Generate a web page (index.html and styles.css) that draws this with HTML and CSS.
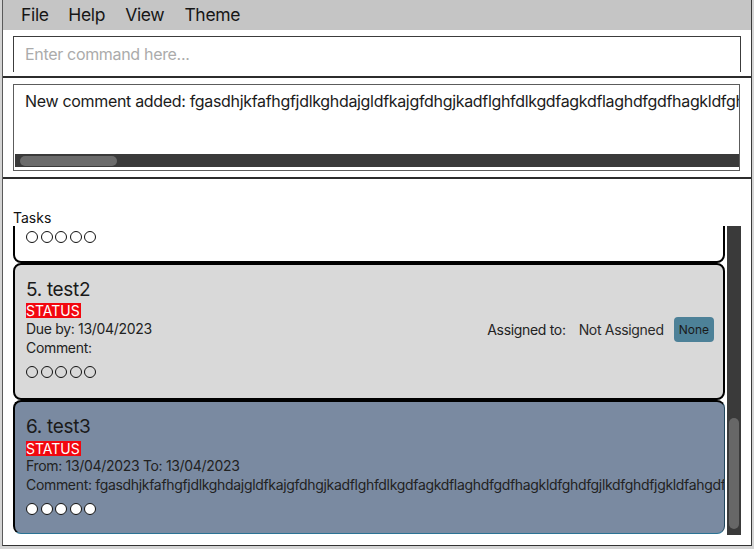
FILE: index.html
```html
<!DOCTYPE html>
<html lang="en">
<head>
<meta charset="utf-8">
<title>Tasks</title>
<link rel="stylesheet" href="styles.css">
</head>
<body>
<div class="app">
  <nav class="menubar">
    <span class="menu-item">File</span>
    <span class="menu-item">Help</span>
    <span class="menu-item">View</span>
    <span class="menu-item">Theme</span>
  </nav>
  <div class="frame">
    <section class="command-pane">
      <div class="command-box">Enter command here...</div>
    </section>
    <section class="result-pane">
      <div class="result-box">
        <div class="result-text">New comment added: fgasdhjkfafhgfjdlkghdajgldfkajgfdhgjkadflghfdlkgdfagkdflaghdfgdfhagkldfghdfgjlkdfghdfjgkldfahgdfkgjdlfhgakdjfhgldkafjhgdfkl</div>
        <div class="hscroll"><div class="hthumb"></div></div>
      </div>
    </section>
    <section class="tasks-pane">
      <div class="tasks-label">Tasks</div>
      <div class="list">
        <div class="list-viewport">
          <div class="card card-plain card-first">
            <div class="dots"><span class="dot"></span><span class="dot"></span><span class="dot"></span><span class="dot"></span><span class="dot"></span></div>
          </div>
          <div class="card card-grey">
            <div class="card-title">5. test2</div>
            <div class="status"><span class="status-tag">STATUS</span></div>
            <div class="details">
              <div class="details-left">
                <div class="line">Due by: 13/04/2023</div>
                <div class="line">Comment:</div>
              </div>
              <div class="assign">
                <span class="assign-label">Assigned to:</span>
                <span class="assign-name">Not Assigned</span>
                <span class="badge">None</span>
              </div>
            </div>
            <div class="dots"><span class="dot"></span><span class="dot"></span><span class="dot"></span><span class="dot"></span><span class="dot"></span></div>
          </div>
          <div class="card card-selected">
            <div class="card-title">6. test3</div>
            <div class="status"><span class="status-tag">STATUS</span></div>
            <div class="line">From: 13/04/2023 To: 13/04/2023</div>
            <div class="line">Comment: fgasdhjkfafhgfjdlkghdajgldfkajgfdhgjkadflghfdlkgdfagkdflaghdfgdfhagkldfghdfgjlkdfghdfjgkldfahgdfkgjdlfhgakdjfhgldkafjhgdfkl</div>
            <div class="dots"><span class="dot dot-white"></span><span class="dot dot-white"></span><span class="dot dot-white"></span><span class="dot dot-white"></span><span class="dot dot-white"></span></div>
          </div>
        </div>
        <div class="vscroll"><div class="vthumb"></div></div>
      </div>
    </section>
  </div>
</div>
</body>
</html>
```

FILE: styles.css
```css
* { box-sizing: border-box; }

html, body {
  margin: 0;
  padding: 0;
}

body {
  width: 754px;
  height: 549px;
  overflow: hidden;
  background: #d4d4d4;
  font-family: "Inter", "Liberation Sans", sans-serif;
  letter-spacing: -0.02em;
  color: #1b1b1b;
}

.app {
  margin-left: 2px;
  width: 750px;
  height: 546px;
  border-left: 1px solid #5a5a5a;
  border-right: 1px solid #3a3a3a;
  border-bottom: 1px solid #333;
  display: flex;
  flex-direction: column;
  background: #fff;
}

.menubar {
  height: 30px;
  flex: none;
  background: #c5c5c5;
  display: flex;
  align-items: center;
  padding-left: 8px;
}

.menu-item {
  font-size: 17.5px;
  line-height: 30px;
  padding: 0 10px;
  color: #161616;
}

.menu-item:first-child { padding-right: 9.5px; }

.frame {
  flex: 1;
  display: flex;
  flex-direction: column;
  min-height: 0;
}

.command-pane {
  height: 48px;
  flex: none;
  padding: 6px 10px 0 10px;
  border-bottom: 2px solid #2c2c2c;
}

.command-box {
  height: 36px;
  border: 1px solid #3c3c3c;
  border-bottom: none;
  padding-left: 11px;
  font-size: 16px;
  line-height: 35px;
  color: #ababab;
}

.result-pane {
  height: 101px;
  flex: none;
  padding: 6px 11px 0 10px;
  border-bottom: 2px solid #2c2c2c;
}

.result-box {
  height: 87px;
  border: 1px solid #5c5c5c;
  display: flex;
  flex-direction: column;
  justify-content: space-between;
  overflow: hidden;
}

.result-text {
  padding: 6px 0 0 11px;
  font-size: 16px;
  line-height: 20px;
  white-space: nowrap;
  overflow: hidden;
  color: #1b1b1b;
}

.hscroll {
  height: 13px;
  margin: 0 0 3px 1px;
  background: #3a3a3a;
  display: flex;
  align-items: flex-end;
  padding: 0 0 1px 5px;
}

.hthumb {
  width: 97px;
  height: 10px;
  border-radius: 5px;
  background: #6b6b6b;
}

.tasks-pane {
  flex: 1;
  padding: 30px 10px 10px 10px;
  display: flex;
  flex-direction: column;
  min-height: 0;
}

.tasks-label {
  font-size: 14px;
  line-height: 17px;
  letter-spacing: 0;
  color: #111;
}

.list {
  flex: 1;
  display: flex;
  min-height: 0;
}

.list-viewport {
  width: 714px;
  overflow: hidden;
  background: #fff;
}

.vscroll {
  width: 14px;
  background: #3a3a3a;
  display: flex;
  flex-direction: column;
  align-items: center;
  padding-top: 192px;
}

.vthumb {
  width: 10px;
  height: 111px;
  border-radius: 5px;
  background: #676767;
}

.card {
  width: 712px;
  border: 2px solid #000;
  border-radius: 8px;
  padding: 12px 0 18px 11px;
  overflow: hidden;
  white-space: nowrap;
}

.card-first {
  margin-top: -96px;
  height: 133px;
  display: flex;
  flex-direction: column;
  justify-content: flex-end;
}

.card-plain { background: #fff; }

.card-grey {
  background: #d9d9d9;
  padding-top: 13px;
  padding-bottom: 20px;
}

.card-grey .details { margin-top: 1px; }

.card-selected {
  background: #7a8aa1;
  border-width: 2px 1px 1px 2px;
  border-color: #000 #22465c #2b7394 #000;
  height: 134px;
  padding-top: 13px;
}

.card-selected .status { margin-top: 3px; }

.card-title {
  font-size: 19px;
  line-height: 23px;
  color: #1a1a1a;
}

.status {
  margin-top: 2px;
  height: 15px;
  display: flex;
}

.status-tag {
  background: #f2070f;
  color: #fff;
  font-size: 14px;
  line-height: 15px;
  letter-spacing: 0;
  padding: 0 1px 0 0;
}

.line {
  font-size: 14px;
  line-height: 19px;
  color: #222;
  overflow: hidden;
}

.details {
  display: flex;
  justify-content: space-between;
  align-items: flex-start;
  padding-right: 9px;
}

.assign {
  display: flex;
  align-items: center;
  margin-top: -2px;
  font-size: 14px;
  color: #222;
}

.assign-name {
  margin-left: 13px;
  color: #2a2a2a;
}

.badge {
  margin-left: 10px;
  background: #4d8198;
  border-radius: 4px;
  height: 25px;
  padding: 0 5px;
  font-size: 12px;
  line-height: 25px;
  letter-spacing: 0;
  color: #1a1a1a;
}

.dots {
  margin-top: 9px;
  display: flex;
  gap: 2.5px;
}

.dot {
  width: 12px;
  height: 12px;
  border: 1px solid #111;
  border-radius: 50%;
}

.dot-white { background: #fff; }
```
